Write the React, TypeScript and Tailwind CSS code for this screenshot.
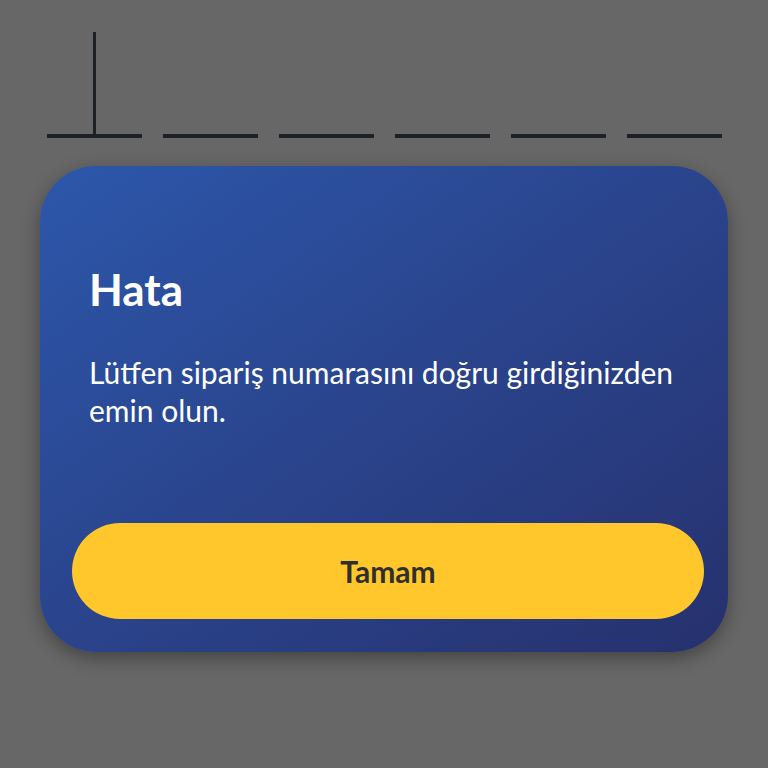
const cells = [0, 1, 2, 3, 4, 5];

function CodeCell({ active }: { active: boolean }) {
  return (
    <div className="flex w-[95px] flex-col items-center">
      <div className={`h-[102px] w-[3px] ${active ? "bg-[#1d2024]" : "bg-transparent"}`} />
      <div className="h-[4px] w-full bg-[#1d2024]" />
    </div>
  );
}

export default function App() {
  return (
    <div
      className="flex min-h-screen flex-col bg-[#676767]"
      style={{ fontFamily: "Lato, 'Noto Sans', sans-serif" }}
    >
      <div className="flex gap-[21px] pl-[47px] pt-[32px]">
        {cells.map((i) => (
          <CodeCell key={i} active={i === 0} />
        ))}
      </div>

      <div className="mx-[40px] mt-[28px] flex flex-col rounded-[56px] bg-linear-to-br from-[#2c57ab] to-[#26316e] pb-[33px] pl-[32px] pr-[24px] pt-[97px] shadow-[0_6px_18px_rgba(0,0,0,0.35)]">
        <h2 className="pl-[17px] text-[44px] font-bold leading-[52px] text-white">Hata</h2>
        <p className="mt-[38px] pl-[17px] pr-[10px] text-[30px] leading-[38px] text-white">
          Lütfen sipariş numarasını doğru girdiğinizden emin olun.
        </p>
        <button className="mt-[94px] flex h-[96px] items-center justify-center rounded-full bg-[#ffc72c] text-[30px] font-bold text-[#2e2f2f]">
          Tamam
        </button>
      </div>
    </div>
  );
}
